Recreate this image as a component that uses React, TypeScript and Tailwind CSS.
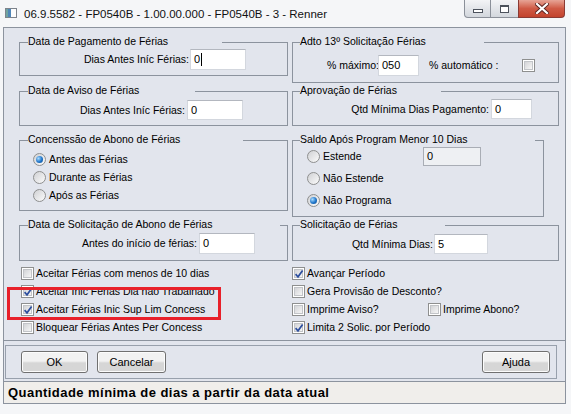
import React from 'react';

type BoxProps = {
    title: string;
    labelCls: string;
    className?: string;
    children?: React.ReactNode;
};

const GroupBox = ({ title, labelCls, className = '', children }: BoxProps) => (
    <div className={`relative border border-[#8c939e] ${className}`}>
        <span className={`absolute -top-[8px] bg-[#e2e5ed] leading-[13px] whitespace-nowrap ${labelCls}`}>{title}</span>
        {children}
    </div>
);

const TextBox = ({ value, className = '', disabled, caret }: { value: string; className?: string; disabled?: boolean; caret?: boolean }) => (
    <span
        className={`flex shrink-0 items-center border pl-[3px] text-[11px] ${
            disabled ? 'border-[#a9adb5] bg-[#eef0f3]' : 'border-[#d3d7de] border-t-[#b3b7bf] bg-white'
        } ${className}`}
    >
        {value}
        {caret && <span className="ml-[1px] h-[13px] w-px bg-black" />}
    </span>
);

const CheckBox = ({ checked }: { checked?: boolean }) => (
    <span className="relative flex h-[13px] w-[13px] shrink-0 items-center justify-center border border-[#8e8f8f] bg-white">
        <span className="h-[9px] w-[9px] border border-[#c2c4c8] bg-linear-to-br from-[#d3d4d7] to-[#f6f6f6]" />
        {checked && (
            <svg className="absolute left-[1px] top-[1px]" width="10" height="10" viewBox="0 0 10 10">
                <path d="M1.6 5.2 L4 7.8 L8.6 1.4" fill="none" stroke="#2c4e9e" strokeWidth="1.7" />
            </svg>
        )}
    </span>
);

const Radio = ({ checked }: { checked?: boolean }) => (
    <span className="flex h-[13px] w-[13px] shrink-0 items-center justify-center rounded-full border border-[#8e8f8f] bg-linear-to-br from-[#d0d1d4] to-[#fbfbfb]">
        {checked && (
            <span className="h-[7px] w-[7px] rounded-full bg-[radial-gradient(circle_at_35%_35%,#a8dcff,#1f74c9_55%,#0c4a8e)]" />
        )}
    </span>
);

const CheckRow = ({ label, checked }: { label: string; checked?: boolean }) => (
    <div className="flex h-[18px] items-center gap-[2px] whitespace-nowrap">
        <CheckBox checked={checked} />
        <span>{label}</span>
    </div>
);

const RadioRow = ({ label, checked, className = '' }: { label: string; checked?: boolean; className?: string }) => (
    <div className={`flex shrink-0 items-center gap-[3px] whitespace-nowrap ${className}`}>
        <Radio checked={checked} />
        <span>{label}</span>
    </div>
);

const WinButton = ({ label, className = '' }: { label: string; className?: string }) => (
    <button
        type="button"
        className={`flex h-[22px] items-center justify-center rounded-[3px] border border-[#707070] bg-linear-to-b from-[#f2f2f2] from-45% to-[#d6d6d6] to-55% text-[11px] shadow-[inset_0_0_0_1px_#fcfcfc] ${className}`}
    >
        {label}
    </button>
);

export default function App() {
    return (
        <div className="relative h-[414px] w-[571px] overflow-hidden bg-[#f5f6f8] font-['Liberation_Sans',Arial,sans-serif] text-[10.5px] leading-[13px] text-black">
            {/* title bar */}
            <div className="flex h-[27px] items-start">
                <svg className="ml-[5px] mt-[8px]" width="12" height="10" viewBox="0 0 12 10">
                    <rect x="0.5" y="0.5" width="11" height="9" fill="#fdfdfd" stroke="#7d838c" />
                    <rect x="1" y="1" width="5" height="8" fill="#4f86b8" />
                    <rect x="1" y="1" width="2" height="8" fill="#6fa3a0" />
                </svg>
                <span className="ml-[7px] mt-[8px] text-[11.5px] leading-[13px] text-[#111]">
                    06.9.5582 - FP0540B - 1.00.00.000 - FP0540B - 3 - Renner
                </span>
                <div className="ml-auto mr-[6px] flex h-[18px]">
                    <div className="flex w-[27px] items-center justify-center rounded-bl-[4px] border border-t-0 border-[#8b9099] bg-linear-to-b from-[#f3f4f6] to-[#d3d7dd]">
                        <span className="mt-[4px] h-[4px] w-[10px] border border-[#4c525c] bg-white" />
                    </div>
                    <div className="flex w-[27px] items-center justify-center border-b border-[#8b9099] bg-linear-to-b from-[#f3f4f6] to-[#d3d7dd]">
                        <span className="h-[8px] w-[9px] border border-t-2 border-[#4c525c] bg-white" />
                    </div>
                    <div className="flex w-[47px] items-center justify-center rounded-br-[4px] border border-t-0 border-[#8a3a33] bg-linear-to-b from-[#e6a496] via-[#cf5a45] to-[#c3432d]">
                        <svg width="14" height="11" viewBox="0 0 14 11">
                            <path d="M2 1 L12 10 M12 1 L2 10" stroke="#5a2320" strokeWidth="4" strokeLinecap="square" />
                            <path d="M2 1 L12 10 M12 1 L2 10" stroke="#ffffff" strokeWidth="2.2" strokeLinecap="square" />
                        </svg>
                    </div>
                </div>
            </div>

            {/* client area */}
            <div className="ml-[3px] flex w-[563px] flex-col border border-[#8c939e] bg-[#e2e5ed]">
                {/* groups panel */}
                <div className="flex h-[313px] gap-[4px] border-b border-[#8c939e] pl-[15px] pt-[14px]">
                    {/* left column */}
                    <div className="flex w-[269px] flex-col">
                        <GroupBox title="Data de Pagamento de Férias" labelCls="left-[8px] w-[194px]" className="h-[34px] pt-[6px]">
                            <div className="flex items-center justify-end pr-[41px]">
                                <span className="mr-[1px]">Dias Antes Iníc Férias:</span>
                                <TextBox value="0" caret className="h-[21px] w-[56px]" />
                            </div>
                        </GroupBox>
                        <GroupBox title="Data de Aviso de Férias" labelCls="left-[8px] w-[167px]" className="mt-[15px] h-[35px] pt-[8px]">
                            <div className="flex items-center justify-end pr-[44px]">
                                <span className="mr-[2px]">Dias Antes Iníc Férias:</span>
                                <TextBox value="0" className="h-[20px] w-[56px]" />
                            </div>
                        </GroupBox>
                        <GroupBox title="Concenssão de Abono de Férias" labelCls="left-[8px] w-[215px]" className="mt-[14px] h-[71px] pl-[13px] pt-[9px]">
                            <RadioRow label="Antes das Férias" checked className="h-[18px]" />
                            <RadioRow label="Durante as Férias" className="h-[18px]" />
                            <RadioRow label="Após as Férias" className="h-[18px]" />
                        </GroupBox>
                        <GroupBox title="Data de Solicitação de Abono de Férias" labelCls="left-[8px] w-[252px]" className="mt-[14px] h-[36px] pt-[7px]">
                            <div className="flex items-center justify-end pr-[32px]">
                                <span className="mr-[2px]">Antes do início de férias:</span>
                                <TextBox value="0" className="h-[21px] w-[56px]" />
                            </div>
                        </GroupBox>
                        <div className="mt-[3px] pl-[2px]">
                            <CheckRow label="Aceitar Férias com menos de 10 dias" />
                            <CheckRow label="Aceitar Inic Férias Dia não Trabalhado" checked />
                            <CheckRow label="Aceitar Férias Inic Sup Lim Concess" checked />
                            <CheckRow label="Bloquear Férias Antes Per Concess" />
                        </div>
                    </div>

                    {/* right column */}
                    <div className="flex w-[267px] flex-col">
                        <GroupBox title="Adto 13º Solicitação Férias" labelCls="left-[7px] w-[184px]" className="h-[41px] pl-[34px] pt-[12px]">
                            <div className="flex items-center whitespace-nowrap">
                                <span className="w-[51px] shrink-0">% máximo:</span>
                                <TextBox value="050" className="h-[21px] w-[41px]" />
                                <span className="ml-[10px] w-[93px] shrink-0">% automático :</span>
                                <CheckBox />
                            </div>
                        </GroupBox>
                        <GroupBox title="Aprovação de Férias" labelCls="left-[7px] w-[141px]" className="mt-[8px] h-[35px] pt-[7px]">
                            <div className="flex items-center justify-end whitespace-nowrap pr-[26px]">
                                <span className="mr-[2px]">Qtd Mínima Dias Pagamento:</span>
                                <TextBox value="0" className="h-[20px] w-[41px]" />
                            </div>
                        </GroupBox>
                        <GroupBox title="Saldo Após Program Menor 10 Dias" labelCls="left-[7px] w-[235px]" className="mt-[14px] h-[77px] w-[252px] pl-[14px] pt-[4px]">
                            <div className="flex h-[22px] items-center">
                                <RadioRow label="Estende" className="w-[116px]" />
                                <TextBox value="0" disabled className="h-[19px] w-[58px]" />
                            </div>
                            <RadioRow label="Não Estende" className="h-[22px]" />
                            <RadioRow label="Não Programa" checked className="h-[22px]" />
                        </GroupBox>
                        <GroupBox title="Solicitação de Férias" labelCls="left-[7px] w-[145px]" className="mt-[8px] h-[36px] pt-[8px]">
                            <div className="flex items-center justify-end whitespace-nowrap pr-[70px]">
                                <span className="mr-[1px]">Qtd Mínima Dias:</span>
                                <TextBox value="5" className="h-[20px] w-[54px]" />
                            </div>
                        </GroupBox>
                        <div className="mt-[3px]">
                            <CheckRow label="Avançar Período" checked />
                            <CheckRow label="Gera Provisão de Desconto?" />
                            <div className="flex">
                                <div className="w-[136px]">
                                    <CheckRow label="Imprime Aviso?" />
                                </div>
                                <CheckRow label="Imprime Abono?" />
                            </div>
                            <CheckRow label="Limita 2 Solic. por Período" checked />
                        </div>
                    </div>
                </div>

                {/* buttons panel */}
                <div className="ml-[1px] mt-[4px] flex h-[34px] w-[552px] items-start border border-[#98a0ac] pl-[15px] pr-[6px] pt-[5px]">
                    <WinButton label="OK" className="w-[67px]" />
                    <WinButton label="Cancelar" className="ml-[9px] w-[69px]" />
                    <WinButton label="Ajuda" className="ml-auto w-[68px]" />
                </div>

                {/* status bar */}
                <div className="mt-[2px] flex h-[22px] items-center border-t border-[#8c939e] bg-[#f0eeeb] pl-[4px] text-[13px] font-bold tracking-[0.45px]">
                    Quantidade mínima de dias a partir da data atual
                </div>
            </div>

            {/* annotation */}
            <div className="absolute left-[7px] top-[287px] h-[33px] w-[214px] border-[3px] border-[#e8202a]" />
        </div>
    );
}
